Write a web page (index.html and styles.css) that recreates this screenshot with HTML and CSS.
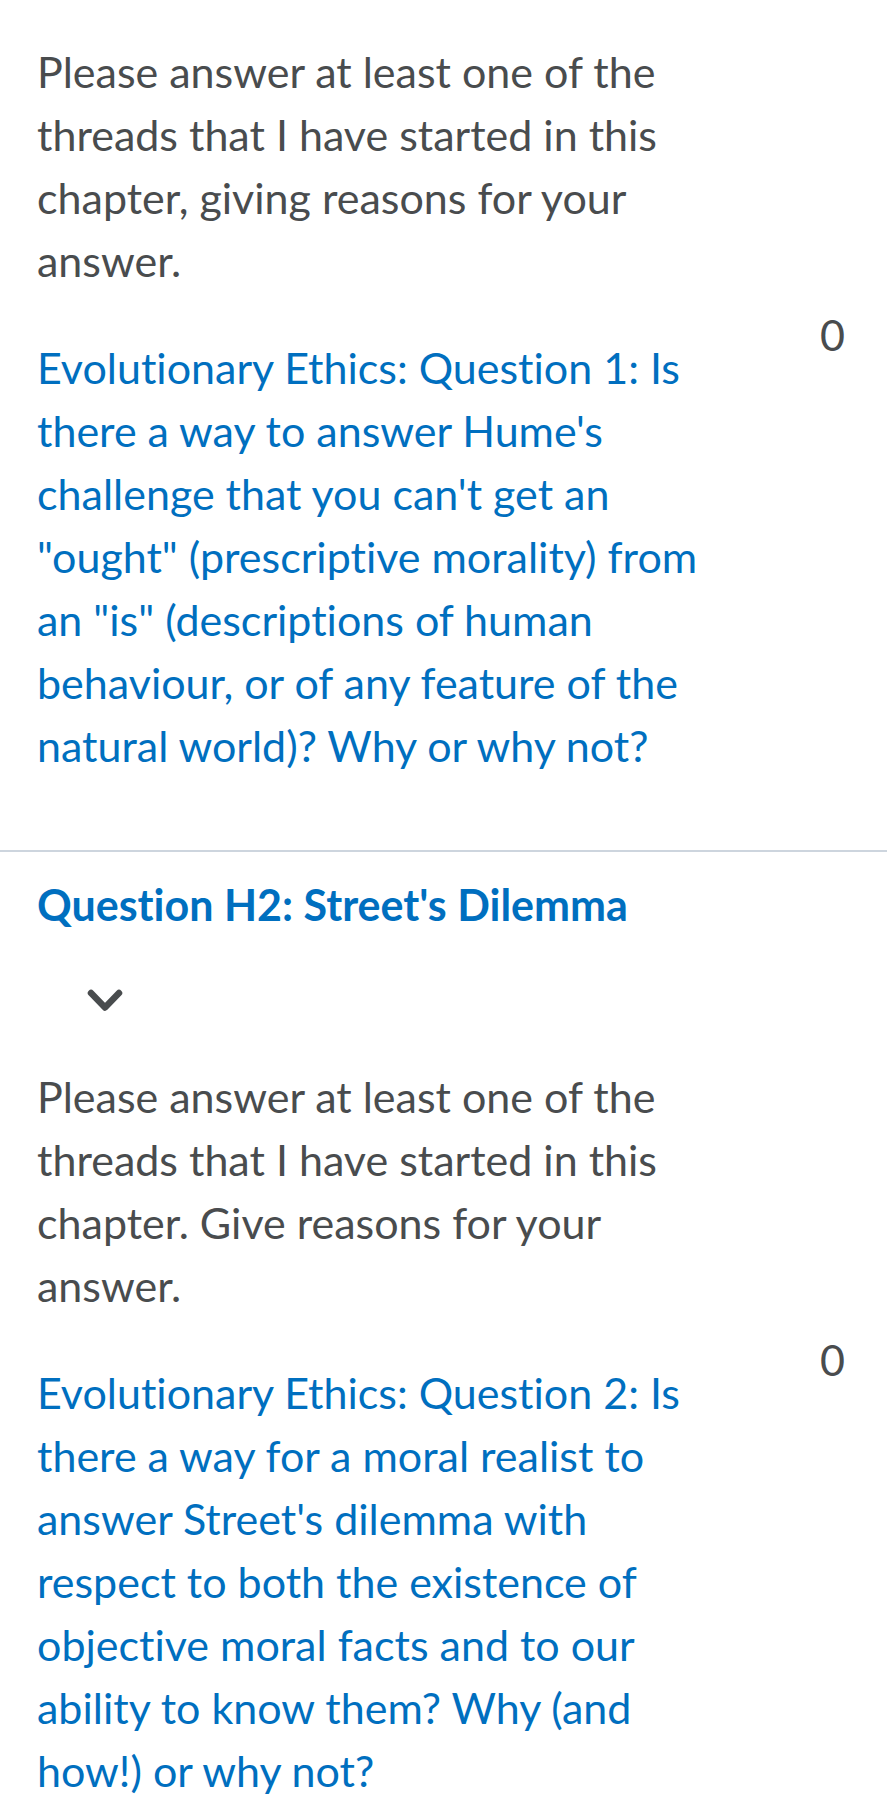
FILE: index.html
```html
<!DOCTYPE html>
<html lang="en">
<head>
<meta charset="utf-8">
<title>Discussions</title>
<link rel="stylesheet" href="styles.css">
</head>
<body>
<main class="list">
  <section class="group group-first">
    <p class="desc">Please answer at least one of the threads that I have started in this chapter, giving reasons for your answer.</p>
    <div class="topic-row">
      <a class="topic-link" href="#">Evolutionary Ethics: Question 1: Is there a way to answer Hume's challenge that you can't get an "ought" (prescriptive morality) from an "is" (descriptions of human behaviour, or of any feature of the natural world)? Why or why not?</a>
      <span class="count">0</span>
    </div>
  </section>
  <hr class="divider">
  <section class="group">
    <h2 class="group-title"><a href="#">Question H2: Street's Dilemma</a></h2>
    <button class="toggle" type="button" aria-label="Collapse">
      <svg width="36" height="23" viewBox="0 0 36 23" aria-hidden="true"><path d="M4 4 L18 18.5 L32 4" fill="none" stroke="#494c4e" stroke-width="6.5" stroke-linecap="round" stroke-linejoin="round"/></svg>
    </button>
    <p class="desc">Please answer at least one of the threads that I have started in this chapter. Give reasons for your answer.</p>
    <div class="topic-row">
      <a class="topic-link" href="#">Evolutionary Ethics: Question 2: Is there a way for a moral realist to answer Street's dilemma with respect to both the existence of objective moral facts and to our ability to know them? Why (and how!) or why not?</a>
      <span class="count">0</span>
    </div>
  </section>
</main>
</body>
</html>
```
FILE: styles.css
```css
html, body {
  margin: 0;
  padding: 0;
  background: #ffffff;
}
body {
  font-family: Lato, "Open Sans", "Liberation Sans", sans-serif;
  font-size: 43px;
  line-height: 63px;
  color: #494c4e;
  font-variant-ligatures: none;
  font-feature-settings: "liga" 0;
}
.list {
  display: flex;
  flex-direction: column;
}
.group {
  padding: 0 42px 0 37px;
  display: flex;
  flex-direction: column;
}
.group-first {
  padding-top: 40px;
  padding-bottom: 73px;
}
.desc {
  margin: 0;
  max-width: 685px;
}
.topic-row {
  display: grid;
  grid-template-columns: 685px 1fr;
  margin-top: 11px;
}
.topic-link {
  grid-column: 1;
  grid-row: 1;
  margin-top: 33px;
  color: #006fbf;
  text-decoration: none;
}
.count {
  grid-column: 2;
  grid-row: 1;
  justify-self: end;
  align-self: start;
}
.divider {
  margin: 0;
  border: 0;
  height: 2px;
  background: #cdd5de;
}
.group-title {
  margin: 21px 0 0;
  font-size: 43px;
  line-height: 63px;
  font-weight: 700;
}
.group-title a {
  color: #006fbf;
  text-decoration: none;
}
.toggle {
  align-self: flex-start;
  margin: 53px 0 0 50px;
  padding: 0;
  border: 0;
  background: none;
  width: 36px;
  height: 23px;
  display: flex;
}
.toggle + .desc {
  margin-top: 53px;
}
```
